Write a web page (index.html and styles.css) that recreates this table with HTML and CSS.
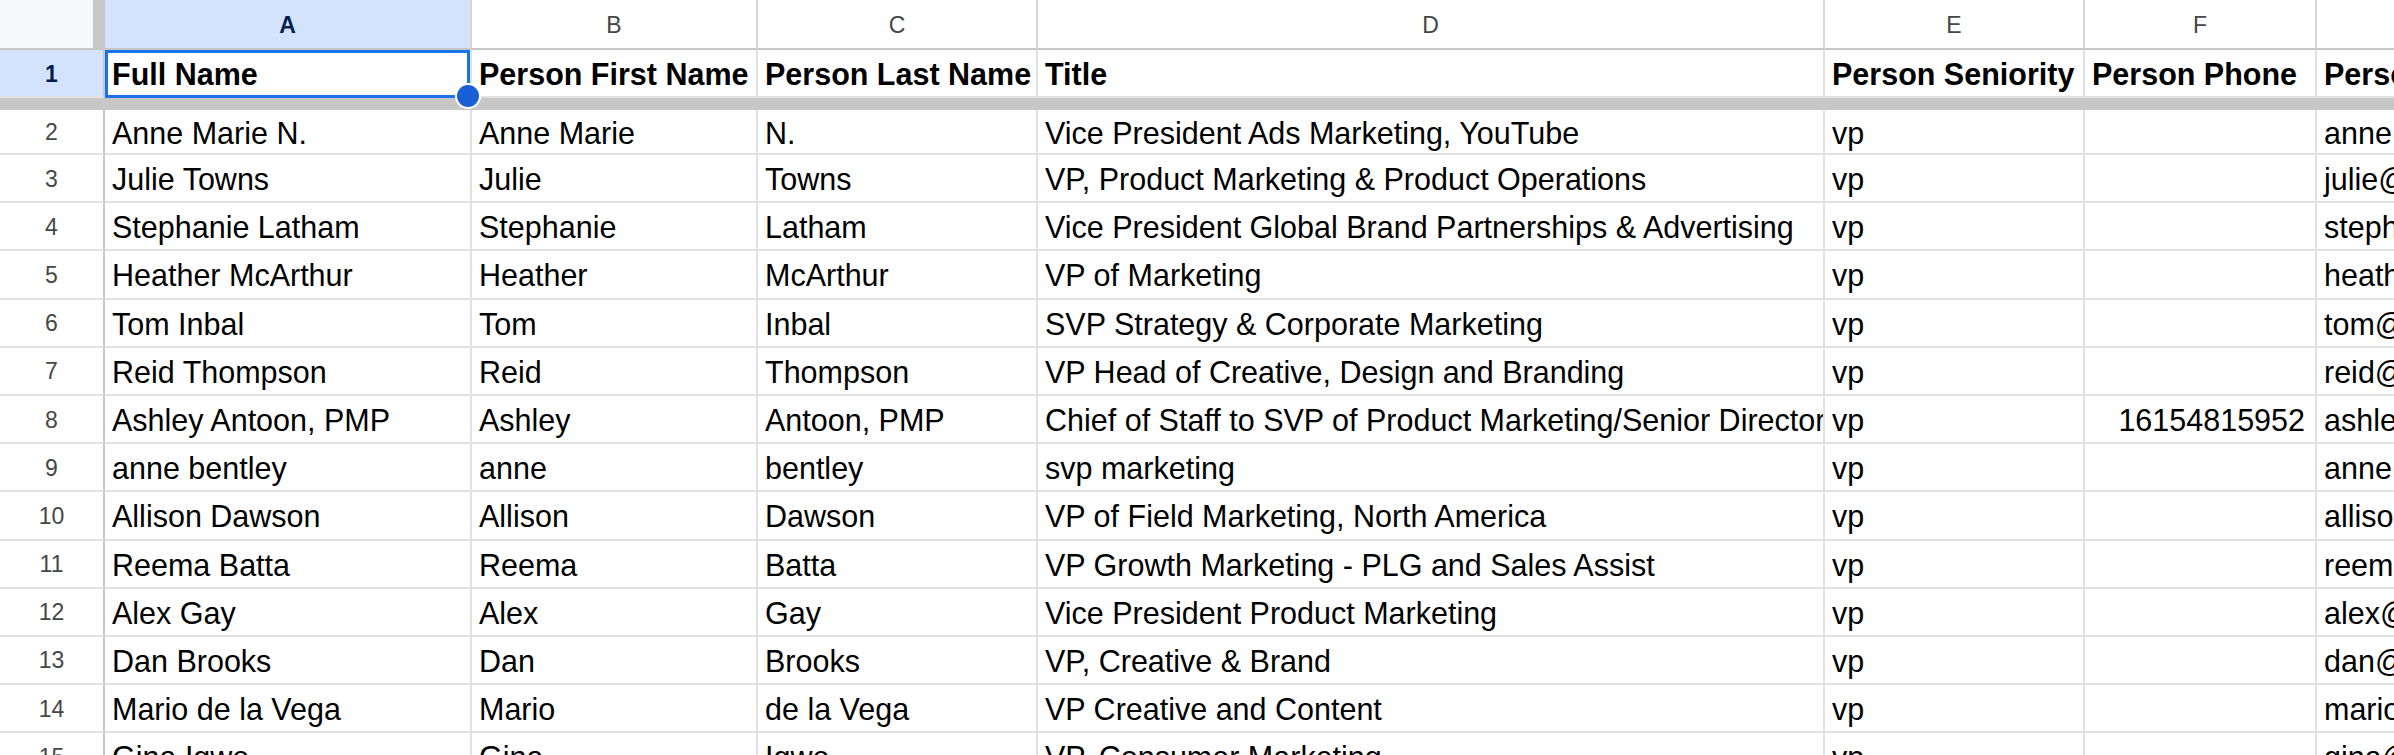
FILE: index.html
```html
<!DOCTYPE html>
<html lang="en">
<head>
  <meta charset="UTF-8" />
  <title>Contacts - Sheet</title>
  <link rel="stylesheet" href="styles.css">
</head>
<body>
  <div class="sheet" id="sheet">
    <div class="corner"></div>
    <div class="colhead sel">A</div>
    <div class="colhead">B</div>
    <div class="colhead">C</div>
    <div class="colhead">D</div>
    <div class="colhead">E</div>
    <div class="colhead">F</div>
    <div class="colhead">G</div>

    <div class="rowhead sel">1</div>
    <div class="cell head active">Full Name</div>
    <div class="cell head">Person First Name</div>
    <div class="cell head">Person Last Name</div>
    <div class="cell head">Title</div>
    <div class="cell head">Person Seniority</div>
    <div class="cell head">Person Phone</div>
    <div class="cell head">Person Email</div>

    <div class="freeze"></div>
  </div>
  <script>
    const sheet = document.getElementById('sheet');

    const rows = [
      ['Anne Marie N.', 'Anne Marie', 'N.', 'Vice President Ads Marketing, YouTube', 'vp', '', 'anne@google.com'],
      ['Julie Towns', 'Julie', 'Towns', 'VP, Product Marketing & Product Operations', 'vp', '', 'julie@hubspot.com'],
      ['Stephanie Latham', 'Stephanie', 'Latham', 'Vice President Global Brand Partnerships & Advertising', 'vp', '', 'stephanie@nbcuni.com'],
      ['Heather McArthur', 'Heather', 'McArthur', 'VP of Marketing', 'vp', '', 'heather@zendesk.com'],
      ['Tom Inbal', 'Tom', 'Inbal', 'SVP Strategy & Corporate Marketing', 'vp', '', 'tom@datadog.com'],
      ['Reid Thompson', 'Reid', 'Thompson', 'VP Head of Creative, Design and Branding', 'vp', '', 'reid@asana.com'],
      ['Ashley Antoon, PMP', 'Ashley', 'Antoon, PMP', 'Chief of Staff to SVP of Product Marketing/Senior Director', 'vp', '16154815952', 'ashley@oracle.com'],
      ['anne bentley', 'anne', 'bentley', 'svp marketing', 'vp', '', 'anne@sprinklr.com'],
      ['Allison Dawson', 'Allison', 'Dawson', 'VP of Field Marketing, North America', 'vp', '', 'allison@okta.com'],
      ['Reema Batta', 'Reema', 'Batta', 'VP Growth Marketing - PLG and Sales Assist', 'vp', '', 'reema@miro.com'],
      ['Alex Gay', 'Alex', 'Gay', 'Vice President Product Marketing', 'vp', '', 'alex@lattice.com'],
      ['Dan Brooks', 'Dan', 'Brooks', 'VP, Creative & Brand', 'vp', '', 'dan@canva.com'],
      ['Mario de la Vega', 'Mario', 'de la Vega', 'VP Creative and Content', 'vp', '', 'mario@intuit.com'],
      ['Gina Igwe', 'Gina', 'Igwe', 'VP, Consumer Marketing', 'vp', '', 'gina@venmo.com']
    ];

    rows.forEach((row, i) => {
      const num = document.createElement('div');
      num.className = 'rowhead';
      num.textContent = i + 2;
      sheet.appendChild(num);

      row.forEach((value, col) => {
        const cell = document.createElement('div');
        cell.className = col === 5 ? 'cell num' : 'cell';
        cell.textContent = value;
        sheet.appendChild(cell);
      });
    });
  </script>
</body>
</html>
```

FILE: styles.css
```css
* {
  box-sizing: border-box;
}
body {
  margin: 0;
  overflow: hidden;
  background: #fff;
  font-family: "Liberation Sans", Arial, sans-serif;
  color: #000;
}
.sheet {
  display: grid;
  grid-template-columns: 105px 367px 286px 280px 787px 260px 232px 320px;
  grid-template-rows: 50px 48px 12px 45px;
  grid-auto-rows: 48.2px;
}
.corner {
  background: #f8f9fa;
  border-right: 12px solid #c7c7c7;
  border-bottom: 2px solid #c7c7c7;
}
.colhead {
  display: flex;
  align-items: center;
  justify-content: center;
  padding-top: 2px;
  font-size: 23px;
  color: #444746;
  border-right: 2px solid #d6d6d6;
  border-bottom: 2px solid #c7c7c7;
}
.rowhead {
  display: flex;
  align-items: center;
  justify-content: center;
  padding-top: 2px;
  font-size: 23px;
  color: #444746;
  border-right: 2px solid #c7c7c7;
  border-bottom: 2px solid #e1e1e1;
}
.sel {
  background: #d3e3fd;
  color: #041e49;
  font-weight: bold;
}
.cell {
  display: flex;
  align-items: center;
  padding: 3px 7px 0;
  font-size: 30.5px;
  white-space: nowrap;
  overflow: hidden;
  border-right: 2px solid #e1e1e1;
  border-bottom: 2px solid #e1e1e1;
}
.cell.head {
  font-weight: bold;
}
.cell.num {
  justify-content: flex-end;
  padding-right: 10px;
}
.freeze {
  grid-column: 1 / -1;
  background: #c7c7c7;
}

/* selected cell A1 */
.cell.active {
  position: relative;
  overflow: visible;
}
.cell.active::after {
  content: '';
  position: absolute;
  left: 0;
  top: 0;
  right: 0;
  bottom: -2px;
  border: 3px solid #1a73e8;
  pointer-events: none;
}
.cell.active::before {
  content: '';
  position: absolute;
  right: -11px;
  bottom: -13px;
  width: 22px;
  height: 22px;
  border-radius: 50%;
  background: #1a5fd6;
  border: 2px solid #fff;
  z-index: 2;
}
```
